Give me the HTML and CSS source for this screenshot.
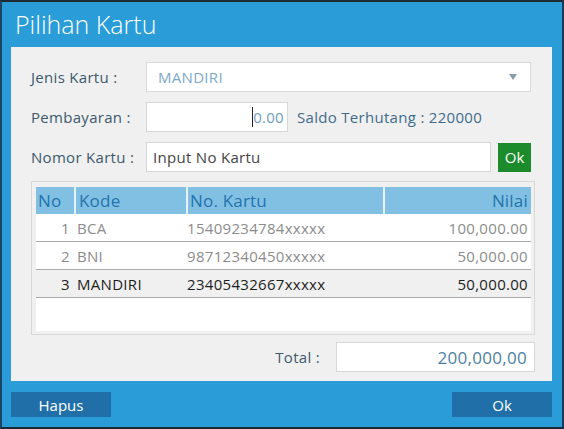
FILE: index.html
```html
<!DOCTYPE html>
<html>
<head>
<meta charset="utf-8">
<link rel="stylesheet" href="styles.css">
</head>
<body>
<div class="window">
  <div class="title">Pilihan Kartu</div>
  <div class="panel">
    <div class="row">
      <div class="label">Jenis Kartu :</div>
      <div class="select">
        <span class="select-text">MANDIRI</span>
        <svg class="arrow" width="8" height="6" viewBox="0 0 8 6"><path d="M0 0 L8 0 L4 6 Z" fill="#8a9bab"/></svg>
      </div>
    </div>
    <div class="row">
      <div class="label">Pembayaran :</div>
      <div class="input pay"><span class="caret"></span><span class="pay-text">0.00</span></div>
      <div class="saldo">Saldo Terhutang : 220000</div>
    </div>
    <div class="row">
      <div class="label">Nomor Kartu :</div>
      <div class="input nomor">Input No Kartu</div>
      <div class="ok-green">Ok</div>
    </div>
    <div class="table-box">
      <div class="grid">
        <div class="tr head">
          <div class="c no">No</div>
          <div class="c kode">Kode</div>
          <div class="c kartu">No. Kartu</div>
          <div class="c nilai">Nilai</div>
        </div>
        <div class="tr">
          <div class="c no">1</div>
          <div class="c kode">BCA</div>
          <div class="c kartu">15409234784xxxxx</div>
          <div class="c nilai">100,000.00</div>
        </div>
        <div class="tr">
          <div class="c no">2</div>
          <div class="c kode">BNI</div>
          <div class="c kartu">98712340450xxxxx</div>
          <div class="c nilai">50,000.00</div>
        </div>
        <div class="tr sel">
          <div class="c no">3</div>
          <div class="c kode">MANDIRI</div>
          <div class="c kartu">23405432667xxxxx</div>
          <div class="c nilai">50,000.00</div>
        </div>
      </div>
    </div>
    <div class="total-row">
      <div class="total-label">Total :</div>
      <div class="total-box">200,000,00</div>
    </div>
  </div>
  <div class="buttons">
    <div class="btn">Hapus</div>
    <div class="btn">Ok</div>
  </div>
</div>
</body>
</html>
```
FILE: styles.css
```css
* { box-sizing: border-box; }
html, body { margin: 0; padding: 0; }
body {
  width: 564px;
  height: 429px;
  overflow: hidden;
  font-family: "Open Sans", "Noto Sans", sans-serif;
  background: #1d2a33;
}
.window {
  width: 564px;
  height: 429px;
  background: #2a9dd8;
  border-top: 2px solid #1e2a32;
  border-left: 2px solid #1a4663;
  border-right: 2px solid #1a3a50;
  border-bottom: 2px solid #1a2a36;
  display: flex;
  flex-direction: column;
  padding: 0 10px 0 9px;
}
.title {
  height: 45px;
  color: #fff;
  font-weight: 300;
  font-size: 25px;
  line-height: 45px;
  padding-left: 4px;
}
.panel {
  background: #f0f0f0;
  height: 334px;
  padding: 15px 17px 9px 20px;
  display: flex;
  flex-direction: column;
}
.row {
  display: flex;
  align-items: center;
  height: 30px;
  margin-bottom: 10px;
}
.label {
  width: 115px;
  color: #3c5a6c;
  font-size: 15px;
  letter-spacing: 0.3px;
}
.select {
  width: 385px;
  height: 30px;
  background: #fff;
  border: 1px solid #dadada;
  display: flex;
  align-items: center;
  justify-content: space-between;
  padding: 0 13px 0 11px;
}
.select-text { color: #7ea8c8; font-size: 15px; letter-spacing: 0.3px; }
.input {
  height: 30px;
  background: #fff;
  border: 1px solid #d6d6d6;
  display: flex;
  align-items: center;
  font-size: 15px;
  letter-spacing: 0.3px;
}
.pay {
  width: 142px;
  justify-content: flex-end;
  padding-right: 3px;
  color: #6e9cbd;
}
.caret {
  width: 1px;
  height: 20px;
  background: #222;
}
.saldo {
  margin-left: 9px;
  color: #3f6c8a;
  font-size: 15px;
  letter-spacing: 0.3px;
}
.nomor {
  width: 345px;
  padding-left: 6px;
  color: #444;
}
.ok-green {
  margin-left: 7px;
  width: 33px;
  height: 29px;
  background: #1b8b2b;
  color: #fff;
  font-size: 15px;
  display: flex;
  align-items: center;
  justify-content: center;
}
.table-box {
  margin-top: -1px;
  width: 504px;
  height: 154px;
  border: 1px solid #d8d8d8;
  padding: 5px 3px 3px 4px;
}
.grid {
  background: #fff;
  height: 100%;
}
.tr {
  display: flex;
  height: 28px;
  border-bottom: 1px solid #a9a9a9;
  align-items: center;
  color: #8c8c8c;
  font-size: 15px;
  letter-spacing: 0.3px;
}
.tr.head {
  height: 27px;
  background: #82c0e3;
  color: #2373ad;
  font-size: 17px;
  letter-spacing: 0.2px;
  border-bottom: none;
}
.tr.sel { background: #f0f0f0; color: #1e1e1e; }
.c { height: 100%; display: flex; align-items: center; white-space: nowrap; }
.no { width: 38px; justify-content: flex-end; padding-right: 4px; }
.kode { width: 112px; padding-left: 3px; }
.kartu { width: 197px; padding-left: 1px; }
.nilai { flex: 1; justify-content: flex-end; padding-right: 3px; }
.head .no { justify-content: flex-start; padding-left: 2px; }
.head .kode, .head .kartu, .head .nilai { border-left: 2px solid #e6f2fa; }
.head .kode { padding-left: 3px; }
.head .kartu { padding-left: 2px; }
.total-row {
  margin-top: 7px;
  display: flex;
  justify-content: flex-end;
  align-items: center;
  height: 30px;
}
.total-label {
  color: #3c5a6c;
  font-size: 15px;
  letter-spacing: 0.3px;
  margin-right: 16px;
}
.total-box {
  width: 199px;
  height: 30px;
  background: #fff;
  border: 1px solid #d6d6d6;
  display: flex;
  align-items: center;
  justify-content: flex-end;
  padding-right: 7px;
  color: #4e7fa3;
  font-size: 17px;
  letter-spacing: 0.3px;
}
.buttons {
  display: flex;
  justify-content: space-between;
  padding-top: 11px;
}
.btn {
  width: 100px;
  height: 25px;
  background: #206fa8;
  color: #fff;
  font-size: 15px;
  display: flex;
  align-items: center;
  justify-content: center;
}
```
